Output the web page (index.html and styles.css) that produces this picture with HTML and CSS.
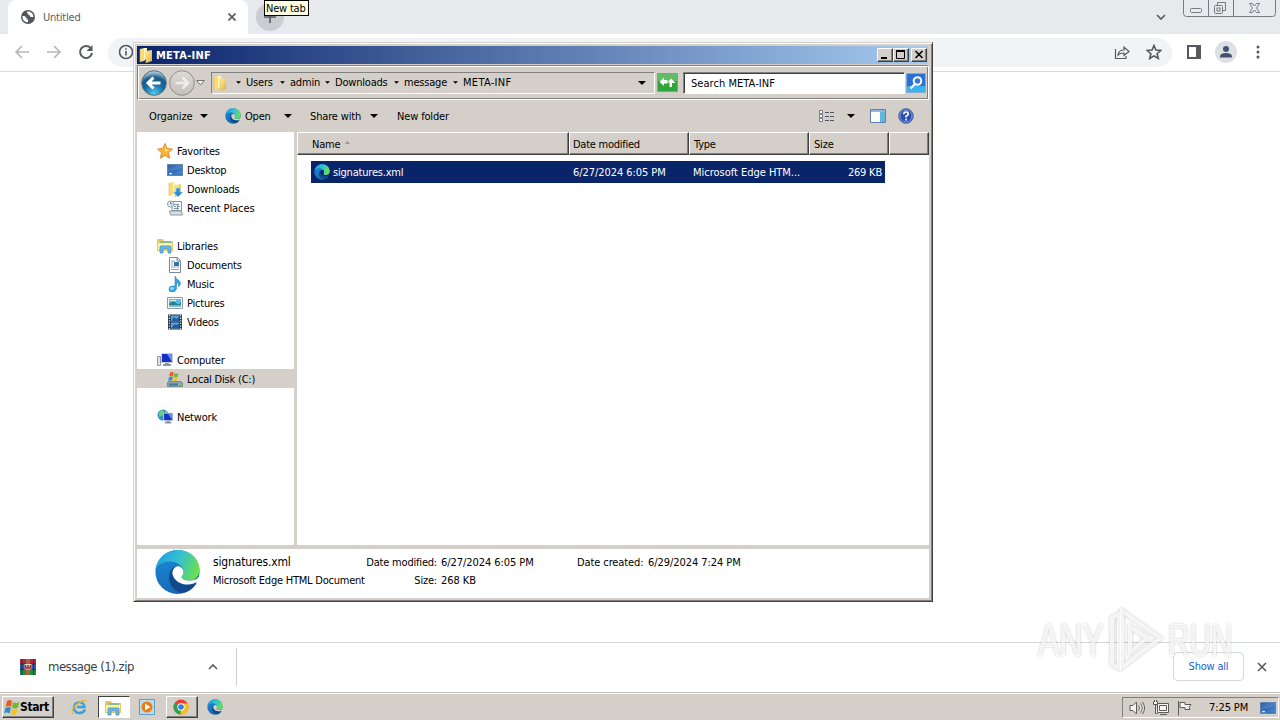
FILE: index.html
```
<!DOCTYPE html>
<html lang="en">
<head>
    <meta charset="utf-8">
    <title>Untitled</title>
    <link rel="stylesheet" href="styles.css">
</head>
<body>
    <!-- shared icons -->
    <svg class="defs" width="0" height="0">
        <defs>
            <linearGradient id="edgeTop" x1="0" y1=".3" x2="1" y2=".6">
                <stop offset="0" stop-color="#1d9fe0"/>
                <stop offset=".5" stop-color="#35c1d0"/>
                <stop offset="1" stop-color="#6be04a"/>
            </linearGradient>
            <linearGradient id="edgeLeft" x1="0" y1="0" x2=".4" y2="1">
                <stop offset="0" stop-color="#1b8fd6"/>
                <stop offset="1" stop-color="#1767b8"/>
            </linearGradient>
            <mask id="edgeCut" maskUnits="userSpaceOnUse" x="0" y="0" width="48" height="48">
                <path d="M0 0h48v48H0z" fill="#fff"/>
                <path d="M24 18c-4 1-6 5-5 9 2 6 8 10 16 10 4 0 6-1 8-2l5 1V26c-2 5-6 7-12 7-5 0-8-2-8-4 1-1 2-3 2-5 0-4-3-6-6-6z" fill="#000"/>
            </mask>
            <linearGradient id="gold" x1="0" y1="0" x2="1" y2="1">
                <stop offset="0" stop-color="#fff3a8"/>
                <stop offset="1" stop-color="#e0ad32"/>
            </linearGradient>
            <linearGradient id="screen" x1="0" y1="0" x2="1" y2="1">
                <stop offset="0" stop-color="#123f92"/>
                <stop offset="1" stop-color="#4a94e0"/>
            </linearGradient>
            <radialGradient id="orbBlue" cx=".5" cy=".95" r=".9">
                <stop offset="0" stop-color="#4fd0f5"/>
                <stop offset=".5" stop-color="#14699c"/>
                <stop offset=".75" stop-color="#1c5c89"/>
                <stop offset="1" stop-color="#a9cbe0"/>
            </radialGradient>
            <linearGradient id="orbGrey" x1="0" y1="0" x2="0" y2="1">
                <stop offset="0" stop-color="#dddad6"/>
                <stop offset="1" stop-color="#c3c0ba"/>
            </linearGradient>
        </defs>
        <symbol id="edge" viewBox="0 0 48 48">
            <g mask="url(#edgeCut)">
                <circle cx="24" cy="24" r="23" fill="url(#edgeLeft)"/>
                <path d="M16 25c-3 8 2 19 13 21 7-1 12-5 15-11-10 4-22 1-24-8 0-3 1-6 4-8-4-1-7 2-8 6z" fill="#114a8b"/>
                <path d="M1 21C4 8 13 1 25 1c13 0 22 10 22 20 0 8-5 12-12 12-4 0-8-2-8-4s3-3 3-6c0-5-6-10-14-10C9 13 4 16 1 21z" fill="url(#edgeTop)"/>
            </g>
        </symbol>
        <symbol id="folder" viewBox="0 0 16 16">
            <path d="M2 2l4-1v13l-4 1z" fill="#f5dc76"/>
            <path d="M6 1h3v10l-3 3z" fill="#fff6bd"/>
            <path d="M8 4l6-1v11l-6 2z" fill="url(#gold)"/>
            <path d="M8 4v12M2 2v13" stroke="#e0b650" stroke-width=".6"/>
        </symbol>
        <symbol id="library" viewBox="0 0 16 16">
            <path d="M0 1h6l1 2h9v10H0z" fill="#eac860"/>
            <path d="M1 5h14v7H1z" fill="#fff0a2"/>
            <path d="M3 4h11" stroke="#66b6a0" stroke-width="1.4"/>
            <path d="M3 15V9q0-1 1-1h9q1 0 1 1v6h-3v-4H6v4z" fill="#6db8e4" stroke="#3d87b9" stroke-width=".7"/>
        </symbol>
        <symbol id="desktop" viewBox="0 0 16 16">
            <path d="M.5 2.500h15v11H.5z" fill="url(#screen)" stroke="#5b83b5"/>
            <path d="M1 3h14v3L1 10z" fill="#fff" opacity=".15"/>
            <path d="M1 12.500h14" stroke="#3a76b8"/>
            <path d="M2 11.500h3" stroke="#c4e4ff" stroke-width="1.500"/>
        </symbol>
        <symbol id="flag" viewBox="0 0 16 16">
            <path d="M3 2q3-2 5 0L7 8q-3-2-5.500 0z" fill="#ee5a25"/>
            <path d="M9 3q3 2 6.500 0L14 8.500q-3 2-6 0z" fill="#72b93b"/>
            <path d="M1.500 9q3-2 5.500 0l-1.500 5.500q-3-2-5.500 0z" fill="#338bd0"/>
            <path d="M8 9.500q3 2 6 0L12.500 15q-3 2-6 0z" fill="#f4c426"/>
        </symbol>
        <symbol id="monitor" viewBox="0 0 16 16">
            <path d="M4 1h12v10H4z" fill="#c8cfd9"/>
            <path d="M5 2h10v8H5z" fill="#1530c2"/>
            <path d="M10 2h5v8z" fill="#6a8cf0"/>
            <path d="M8 11h4v1h2v2H6v-2h2z" fill="#8b95a3"/>
        </symbol>
        <symbol id="caret" viewBox="0 0 8 4">
            <path d="M0 0h8L4 4z" fill="currentColor"/>
        </symbol>
    </svg>

    <div class="browser">
        <div class="tabstrip">
            <div class="tab">
                <svg class="globe" viewBox="0 0 14 14">
                    <circle cx="7" cy="7" r="7" fill="#53575b"/>
                    <path d="M1.500 6c2 0 4 .6 4 2.300 0 1 1.500.5 1.500 2v2C4 12.500 1 10 1.500 6zM6 1.500c-.5 1.500 1 1.500 1 2.500 0 1.500 2 .5 2 2s2.500 1 3.500 1C12.500 4 10 1 6 1.500z" fill="#fff"/>
                </svg>
                <span class="tab-title">Untitled</span>
                <svg class="tab-close" viewBox="0 0 8 8"><path d="M.5.5l7 7M7.500.5l-7 7"/></svg>
            </div>
            <div class="new-tab"><svg viewBox="0 0 12 12"><path d="M6 0v12M0 6h12"/></svg></div>
            <svg class="tab-search" viewBox="0 0 10 6"><path d="M1 1l4 4 4-4"/></svg>
            <svg class="win-controls" viewBox="0 0 93 17">
                <path d="M.5 0v13.500q0 3 3 3h86q3 0 3-3V0M25.500 0v16M50.500 0v16"/>
                <rect x="7.500" y="8.500" width="11" height="4" rx="1"/>
                <path d="M34.500 5V2.500h8v8H40"/>
                <rect x="31.500" y="5.500" width="8" height="8" rx="1"/>
                <rect x="34" y="8" width="3" height="3"/>
                <path d="M66.500 3.500h3l2 2.500 2-2.500h3L73.500 8l3 4.500h-3l-2-2.500-2 2.500h-3l3-4.500z"/>
            </svg>
        </div>
        <div class="toolbar">
            <svg class="tool" viewBox="0 0 16 16"><path d="M15 8H2M8 2L2 8l6 6" stroke="#b5b7b9"/></svg>
            <svg class="tool" viewBox="0 0 16 16"><path d="M1 8h13M8 2l6 6-6 6" stroke="#b5b7b9"/></svg>
            <svg class="tool" viewBox="0 0 16 16"><path d="M13 4.500A6 6 0 1 0 14 9" stroke-width="2"/><path d="M14.500 1v6h-6z" class="solid"/></svg>
            <div class="omnibox">
                <svg class="info" viewBox="0 0 16 16"><circle cx="8" cy="8" r="6.500"/><path d="M8 7v4.500M8 4.200v1.600"/></svg>
                <svg class="share" viewBox="0 0 16 16"><path d="M1.500 5v9.500H12V12M4 11c.5-4 2.500-5 6-5V3l5 4.500-5 4V9c-3 0-4.500.5-6 2z"/></svg>
                <svg class="star" viewBox="0 0 16 16"><path d="M8 1.500l1.900 4.600 4.900.4-3.700 3.200 1.200 4.800L8 11.900l-4.300 2.600 1.200-4.800-3.700-3.200 4.900-.4z"/></svg>
            </div>
            <svg class="side-panel" viewBox="0 0 14 14"><path d="M1 1h12v12H1z" stroke-width="2"/><path d="M9 1h4v12H9z" class="solid"/></svg>
            <svg class="avatar" viewBox="0 0 22 22"><circle cx="11" cy="11" r="11" fill="#dde0e4"/><circle cx="11" cy="8" r="3" fill="#44526f"/><path d="M5 16.500v-1q0-3.500 6-3.500t6 3.500v1z" fill="#44526f"/></svg>
            <svg class="menu-dots" viewBox="0 0 4 14"><circle cx="2" cy="2" r="1.500"/><circle cx="2" cy="7" r="1.500"/><circle cx="2" cy="12" r="1.500"/></svg>
        </div>
        <div class="page"></div>
        <div class="downloads">
            <svg class="rar" viewBox="0 0 16 16">
                <path d="M0 0h16v5H0z" fill="#b5263f"/><path d="M0 5h16v5H0z" fill="#3557ae"/><path d="M0 10h16v6H0z" fill="#25884a"/>
                <path d="M0 5h16M0 10.500h16M2 0v16M13.500 0v16" stroke="#26233b" stroke-width=".8"/>
                <path d="M6 0h4v16H6z" fill="#a56832"/><path d="M4.500 5h7v5.500h-7z" fill="#e6dcc8"/><path d="M5.500 6v3h5V6M8 6v3" fill="none" stroke="#a02c2c"/>
            </svg>
            <span class="file-name">message (1).zip</span>
            <svg class="chevron-up" viewBox="0 0 10 6"><path d="M1 5l4-4 4 4"/></svg>
            <div class="split"></div>
            <div class="show-all">Show all</div>
            <svg class="bar-close" viewBox="0 0 10 10"><path d="M1 1l8 8M9 1L1 9"/></svg>
        </div>
    </div>

    <div class="taskbar">
        <div class="start"><svg><use href="#flag"/></svg>Start</div>
        <div class="task">
            <svg viewBox="0 0 16 16"><path d="M14 10.500C11.500 16 3 15 3 8.500S13 1.500 13.500 8H6" fill="none" stroke="#36a2e0" stroke-width="2.500"/><path d="M2 15C-2 11 8 1 15.500 1.500" fill="none" stroke="#e8b634" stroke-width="1.300"/></svg>
        </div>
        <div class="task pressed"><svg><use href="#library"/></svg></div>
        <div class="task">
            <svg viewBox="0 0 16 16"><path d="M.5.5h15v15H.5z" fill="#b9dcf0" stroke="#5c9fc6"/><circle cx="8" cy="8" r="5.500" fill="#ee7c14"/><path d="M6 4.800v6.400L11.500 8z" fill="#fff"/></svg>
        </div>
        <div class="task raised">
            <svg viewBox="0 0 16 16"><circle cx="8" cy="8" r="7.500" fill="#e8402f"/><path d="M8 8L1.500 4.200A7.500 7.500 0 0 0 7.500 15.500l4-5.500z" fill="#2ba24c"/><path d="M8 8l-.5 7.500A7.500 7.500 0 0 0 14.700 4.500H8z" fill="#fbc116"/><circle cx="8" cy="8" r="3.700" fill="#fff"/><circle cx="8" cy="8" r="2.800" fill="#3b7be8"/></svg>
        </div>
        <div class="task"><svg><use href="#edge"/></svg></div>
        <div class="tray">
            <svg viewBox="0 0 16 16"><path d="M1 5.500h3L7.500 2v12L4 10.500H1zM9.500 5.500q2 2.500 0 5M11.500 3.500q3.500 4.500 0 9M13.500 2q4 6 0 12"/></svg>
            <svg viewBox="0 0 16 16"><path d="M4.500 3.500h11v9h-11zM6.500 5.500h7v5h-7zM7 14.500h7M.5 1.500v3h4v-3M1.500 0v2M3.500 0v2M2.500 4.500v9h2"/></svg>
            <svg viewBox="0 0 16 16"><path d="M1.500 1v14.500M3 2.500h5v2h6l-2 3 1 2H8v-2H3z"/></svg>
            <span class="clock">7:25 PM</span>
            <svg class="peek"><use href="#desktop"/></svg>
        </div>
    </div>

    <div class="explorer">
        <div class="titlebar">
            <svg><use href="#folder"/></svg>
            <span>META-INF</span>
            <div class="caption-btn"><svg viewBox="0 0 10 9"><path d="M1 8h6" stroke-width="2"/></svg></div>
            <div class="caption-btn"><svg viewBox="0 0 10 9"><path d="M.5 1h8v7.500h-8z"/><path d="M0 1h9" stroke-width="2"/></svg></div>
            <div class="caption-btn close"><svg viewBox="0 0 10 9"><path d="M1.500 1l7 7M8.500 1l-7 7" stroke-width="1.600"/></svg></div>
        </div>
        <div class="navbar">
            <svg class="orb" viewBox="0 0 26 26"><circle cx="13" cy="13" r="12.300" fill="url(#orbBlue)" stroke="#5b6f7b"/><path d="M19.500 13H8M12.500 7.500L7 13l5.500 5.500" stroke="#fff" stroke-width="3" fill="none"/></svg>
            <svg class="orb" viewBox="0 0 26 26"><circle cx="13" cy="13" r="12.300" fill="url(#orbGrey)" stroke="#8f8c87"/><path d="M6.500 13H18M13.500 7.500L19 13l-5.500 5.500" stroke="#efede9" stroke-width="2.500" fill="none"/></svg>
            <svg class="recent" viewBox="0 0 9 6"><path d="M.7.500h7.600L4.500 5z" fill="#f4f3f0" stroke="#77746f"/></svg>
            <div class="address">
                <svg class="folder"><use href="#folder"/></svg>
                <svg class="sep"><use href="#caret"/></svg><span class="c1">Users</span>
                <svg class="sep"><use href="#caret"/></svg><span class="c2">admin</span>
                <svg class="sep"><use href="#caret"/></svg><span class="c3">Downloads</span>
                <svg class="sep"><use href="#caret"/></svg><span class="c4">message</span>
                <svg class="sep"><use href="#caret"/></svg><span class="c5">META-INF</span>
                <svg class="drop"><use href="#caret"/></svg>
            </div>
            <svg class="refresh" viewBox="0 0 21 19"><path d="M.5.5h20v18H.5z" fill="#2fa53b" stroke="#77a77d"/><path d="M1 1h19v7H1z" fill="#74c978" opacity=".7"/><path d="M2.500 9L7 4.500V7h3.500v3.500H7V13zM18.500 10L14 5.500 10.500 9.500h2V14H15v-4z" fill="#fff"/></svg>
            <div class="search">Search META-INF</div>
            <svg class="search-btn" viewBox="0 0 20 20"><path d="M.5.500h19v19H.5z" fill="#2a6fd6" stroke="#8badd4"/><path d="M1 13h18v6H1z" fill="#39b2ee"/><circle cx="11.500" cy="8" r="3.800" fill="#3c78d4" stroke="#fff" stroke-width="2"/><path d="M9 11l-4.500 4.500" stroke="#fff" stroke-width="2.400"/></svg>
        </div>
        <div class="commands">
            <span class="organize">Organize</span><svg class="arrow"><use href="#caret"/></svg>
            <svg class="cmd-edge"><use href="#edge"/></svg><span class="open">Open</span><svg class="arrow"><use href="#caret"/></svg>
            <span class="share-with">Share with</span><svg class="arrow"><use href="#caret"/></svg>
            <span class="new-folder">New folder</span>
            <svg class="views" viewBox="0 0 15 13"><path d="M.5.500h3v3h-3zM.5 4.500h3v3h-3zM.5 8.500h3v3h-3z" fill="#fff" stroke="#777b88"/><path d="M6 2.500h4M11 2.500h4M6 6.500h4M11 6.500h4M6 10.500h4M11 10.500h4" stroke="#50545e"/></svg>
            <svg class="arrow"><use href="#caret"/></svg>
            <svg class="preview" viewBox="0 0 16 14"><path d="M.5.500h15v13H.5z" fill="#fff" stroke="#5d7fa9"/><path d="M1 1h14v2H1z" fill="#93b5df"/><path d="M10 3h5v10h-5z" fill="#62b5db"/></svg>
            <svg class="help" viewBox="0 0 16 16"><circle cx="8" cy="8" r="7.400" fill="#2a4fae" stroke="#6d7fa9"/><circle cx="8" cy="8" r="6" fill="none" stroke="#93aee6" stroke-width=".8"/><path d="M5.800 6.300Q5.800 4 8 4t2.200 2Q10.200 7.200 8 8.300v1.200M8 10.800v1.700" fill="none" stroke="#fff" stroke-width="1.700"/></svg>
        </div>
        <div class="body">
            <div class="tree">
                <div class="row root"><svg viewBox="0 0 16 16"><path d="M8 .5l2.200 5 5.300.6-4 3.600 1.200 5.500L8 12.400l-4.700 2.800 1.200-5.500-4-3.600 5.300-.6z" fill="#fbb536" stroke="#d97920" stroke-width=".8"/><path d="M8 3l1.200 3.500 3 .5L8 9z" fill="#ffe58d"/></svg><span>Favorites</span></div>
                <div class="row"><svg><use href="#desktop"/></svg><span>Desktop</span></div>
                <div class="row"><svg viewBox="0 0 16 16"><use href="#folder" width="16" height="16"/><path d="M9 7h4v4h3l-5 5-5-5h3z" fill="#288ede" stroke="#b7e3ff" stroke-width=".6"/></svg><span>Downloads</span></div>
                <div class="row recent-places"><svg viewBox="0 0 16 16"><path d="M5 1.500h9.500v9H5z" fill="#f8fafc" stroke="#8395a5"/><path d="M7 4.500h5M7 6.500h2M10 6.500h3M7 8.500h5M10.500 4v6" stroke="#7b93a8"/><path d="M2.500 11h12l1 4h-12z" fill="#d8dde2" stroke="#8e9aa5"/><circle cx="3.500" cy="4" r="3" fill="#edf4f8" stroke="#899aa9"/><path d="M3.500 2v2h1.500" stroke="#667a8a" fill="none"/></svg><span>Recent Places</span></div>
                <div class="row root group"><svg><use href="#library"/></svg><span>Libraries</span></div>
                <div class="row"><svg viewBox="0 0 16 16"><path d="M3 .5h7.500l3 3v12H2.500V.5z" fill="#fff" stroke="#77899b"/><path d="M10 1v3h3" fill="#d5e1ec" stroke="#77899b"/><path d="M4 4h4M4 6h2M4 8h2M4 10h8M4 12.500h8" stroke="#93a5b5"/><path d="M7 5h5v4H7z" fill="#2d78a6"/></svg><span>Documents</span></div>
                <div class="row"><svg viewBox="0 0 16 16"><path d="M8 0q1 3 4 4.500 3 3-.5 6.500 1-3-2-4.500V13q-1 3-4.500 3T2 13q0-3 3.500-3H8z" fill="#36a4e6" stroke="#1c78b9" stroke-width=".5"/><ellipse cx="5" cy="12.500" rx="2" ry="1.500" fill="#91d5fa"/></svg><span>Music</span></div>
                <div class="row"><svg viewBox="0 0 16 16"><path d="M.5 2.500h15v11H.5z" fill="#fff" stroke="#8d9aa7"/><path d="M2 4h12v8H2z" fill="#5bb9e8"/><path d="M2 9q4-4 7-1t5-1v5H2z" fill="#297f86"/><path d="M3 5.500h6M2 11h12" stroke="#d8f4fb"/></svg><span>Pictures</span></div>
                <div class="row"><svg viewBox="0 0 16 16"><path d="M1 .500h14v15H1z" fill="#273948"/><path d="M4 1.500h8v6H4zM4 8.500h8v6H4z" fill="#5aa1de"/><path d="M5 6q2-4 3-2t4-1v4H5zM5 13q3-4 4-2l3-1v4H5z" fill="#225c9b"/><path d="M2.500 1v15M13.500 1v15" stroke="#d9e1e7" stroke-width="1.300" stroke-dasharray="1.300 1.300"/></svg><span>Videos</span></div>
                <div class="row root group"><svg viewBox="0 0 16 16"><use href="#monitor" width="16" height="16"/><path d="M.5 4.500h3v9h-3z" fill="#dfe3e7" stroke="#8f98a1"/></svg><span>Computer</span></div>
                <div class="row selected"><svg viewBox="0 0 16 16"><use href="#flag" x="1" y="0" width="11" height="11"/><path d="M1.500 10.500h12l2 1.500v3.500H.5V12z" fill="#8fa4b2" stroke="#607482" stroke-width=".7"/><path d="M2 13.500h9" stroke="#407b9a" stroke-width="2"/><path d="M12 13.500h2" stroke="#66d74e" stroke-width="1.500"/></svg><span>Local Disk (C:)</span></div>
                <div class="row root group"><svg viewBox="0 0 16 16"><circle cx="6" cy="6" r="5.500" fill="#3092bc"/><path d="M2 3q4-4 5 0l-2 4-3 1zM8 1l3 3-3 1z" fill="#73ce7b"/><use href="#monitor" x="3" y="3" width="13" height="13"/></svg><span>Network</span></div>
            </div>
            <div class="list">
                <div class="header">
                    <div class="col name">Name<svg viewBox="0 0 6 3"><path d="M0 3h6L3 0z"/></svg></div>
                    <div class="col date">Date modified</div>
                    <div class="col type">Type</div>
                    <div class="col size">Size</div>
                    <div class="col rest"></div>
                </div>
                <div class="file">
                    <div class="f-name"><svg><use href="#edge"/></svg>signatures.xml</div>
                    <div class="f-date">6/27/2024 6:05 PM</div>
                    <div class="f-type">Microsoft Edge HTM...</div>
                    <div class="f-size">269 KB</div>
                </div>
            </div>
        </div>
        <div class="details">
            <svg class="big-icon"><use href="#edge"/></svg>
            <div class="info-col first">
                <div class="big">signatures.xml</div>
                <div>Microsoft Edge HTML Document</div>
            </div>
            <div class="info-col labels">
                <div>Date modified:</div>
                <div>Size:</div>
            </div>
            <div class="info-col values">
                <div>6/27/2024 6:05 PM</div>
                <div>268 KB</div>
            </div>
            <div class="info-col created">
                <div>Date created:</div>
            </div>
            <div class="info-col last">
                <div>6/29/2024 7:24 PM</div>
            </div>
        </div>
    </div>

    <div class="tooltip">New tab</div>

    <div class="watermark">
        <span>ANY</span>
        <svg viewBox="0 0 56 64"><path d="M5 10v46l7 4V6z"/><path d="M15 3l38 27-38 29z"/><path d="M23 19l17 11-17 14z"/></svg>
        <span class="run">RUN</span>
    </div>
</body>
</html>
```
FILE: styles.css
```
* {
    box-sizing: border-box;
}

body {
    margin: 0;
    width: 1280px;
    height: 720px;
    overflow: hidden;
    position: relative;
    display: flex;
    flex-direction: column;
    background: #fff;
    color: #000;
    font-family: "DejaVu Sans Condensed", "DejaVu Sans", sans-serif;
    font-stretch: condensed;
    font-size: 11px;
    letter-spacing: -0.2px;
    white-space: nowrap;
}

svg {
    display: block;
    flex: none;
    width: 16px;
    height: 16px;
}

.defs {
    position: absolute;
    width: 0;
    height: 0;
}

/* browser */
.browser {
    flex: 1;
    display: flex;
    flex-direction: column;
}

.browser svg {
    fill: none;
    stroke: #55595d;
    stroke-width: 1.6;
}

.browser .globe,
.browser .avatar,
.browser .rar {
    stroke: none;
}

.browser .solid {
    fill: #55595d;
    stroke: none;
}

.tabstrip {
    height: 34px;
    display: flex;
    background: #e7eaed;
}

.tab {
    width: 240px;
    margin-left: 8px;
    padding: 0 12px 0 13px;
    display: flex;
    align-items: center;
    background: #fff;
    border-radius: 8px 8px 0 0;
    color: #5a5d61;
}

.globe {
    width: 14px;
    height: 14px;
}

.tab-title {
    margin-left: 8px;
    flex: 1;
}

.tab-close {
    width: 8px;
    height: 8px;
}

.new-tab {
    width: 28px;
    height: 28px;
    margin: 3px 0 0 8px;
    padding: 8px;
    border-radius: 50%;
    background: #c9ccd0;
}

.new-tab svg {
    width: 12px;
    height: 12px;
}

.tab-search {
    width: 10px;
    height: 6px;
    margin: 14px 17px 0 auto;
}

.browser .win-controls {
    width: 93px;
    height: 17px;
    margin-right: 4px;
    stroke: #777b7f;
    stroke-width: 1;
}

.toolbar {
    height: 38px;
    padding: 0 0 1px 14px;
    display: flex;
    align-items: center;
    border-bottom: 1px solid #d9dbdd;
}

.tool {
    margin-right: 16px;
}

.omnibox {
    width: 1064px;
    height: 29px;
    margin-left: -2px;
    padding: 0 10px;
    display: flex;
    align-items: center;
    gap: 16px;
    border-radius: 15px;
    background: #f1f3f4;
}

.info {
    margin-right: auto;
}

.browser .share {
    stroke-width: 1.2;
}

.side-panel {
    width: 14px;
    height: 14px;
    margin-left: 15px;
}

.avatar {
    width: 22px;
    height: 22px;
    margin-left: 14px;
}

.browser .menu-dots {
    width: 4px;
    height: 14px;
    margin-left: 19px;
    fill: #55595d;
    stroke: none;
}

.page {
    flex: 1;
}

.downloads {
    height: 50px;
    padding: 0 13px 2px 20px;
    display: flex;
    align-items: center;
    border-top: 1px solid #d2d4d6;
}

.file-name {
    width: 167px;
    margin-left: 12px;
    font-size: 13px;
    letter-spacing: -0.5px;
    color: #3c4043;
}

.chevron-up {
    width: 10px;
    height: 6px;
    margin-left: -7px;
}

.split {
    width: 1px;
    height: 38px;
    margin-left: 18px;
    background: #cfd1d3;
}

.show-all {
    width: 71px;
    height: 29px;
    margin-left: auto;
    border: 1px solid #d5d8db;
    border-radius: 4px;
    line-height: 27px;
    text-align: center;
    color: #1a65c8;
}

.bar-close {
    width: 10px;
    height: 10px;
    margin-left: 13px;
}

/* taskbar */
.taskbar {
    height: 28px;
    padding: 3px 0 0 2px;
    display: flex;
    background: #d4cfc8;
    border-top: 1px solid #c2bfb8;
    box-shadow: inset 0 1px #fff;
}

.start,
.raised {
    border: 1px solid;
    border-color: #fff #404040 #404040 #fff;
    box-shadow: inset -1px -1px #808080;
}

.start {
    width: 52px;
    height: 22px;
    margin-right: 10px;
    padding-left: 1px;
    display: flex;
    align-items: center;
    font-weight: bold;
    font-size: 12px;
    letter-spacing: -0.4px;
}

.task {
    width: 32px;
    height: 22px;
    margin-right: 2px;
    padding: 3px 7px;
}

.pressed {
    background: #fff;
    border: 1px solid;
    border-color: #404040 #fff #fff #404040;
    padding: 3px 6px;
}

.raised {
    padding: 2px 6px;
}

.tray {
    width: 157px;
    margin: 1px 1px 2px auto;
    padding-left: 6px;
    display: flex;
    align-items: center;
    gap: 8px;
    border: 1px solid;
    border-color: #808080 #fff #fff #808080;
}

.tray svg {
    fill: #f5f4f1;
    stroke: #5d5b58;
}

.clock {
    width: 43px;
    margin-left: 8px;
    letter-spacing: -0.1px;
}

.tray .peek {
    stroke: none;
}

/* file explorer window */
.explorer {
    position: absolute;
    left: 133px;
    top: 42px;
    width: 800px;
    height: 560px;
    padding: 2px 3px;
    display: flex;
    flex-direction: column;
    background: #d4cfc8;
    border: 1px solid;
    border-color: #d4cfc8 #404040 #404040 #d4cfc8;
    box-shadow: inset 1px 1px #fff, inset -1px -1px #808080;
}

.titlebar {
    height: 18px;
    margin: 1px 1px 0 0;
    padding: 0 1px;
    display: flex;
    align-items: center;
    background: linear-gradient(90deg, #0a246a, #a6caf0);
    color: #fff;
    font-weight: bold;
    letter-spacing: 0.25px;
}

.titlebar span {
    margin: 0 auto 0 2px;
}

.caption-btn {
    width: 16px;
    height: 14px;
    padding: 1px 2px;
    background: #d4cfc8;
    border: 1px solid;
    border-color: #fff #404040 #404040 #fff;
    box-shadow: inset -1px -1px #808080;
}

.caption-btn svg {
    width: 10px;
    height: 9px;
    fill: none;
    stroke: #000;
}

.close {
    margin-left: 2px;
}

.navbar {
    height: 35px;
    margin: 1px 0 0;
    padding-left: 3px;
    display: flex;
    align-items: center;
    border: 1px solid;
    border-color: #808080 #fff #fff #808080;
    box-shadow: inset 1px 1px #fff, inset -1px -1px #808080;
}

.orb {
    width: 26px;
    height: 26px;
    margin-right: 2px;
}

.recent {
    width: 9px;
    height: 6px;
    margin-left: -1px;
}

.address {
    width: 444px;
    height: 22px;
    margin-left: 6px;
    display: flex;
    align-items: center;
    border: 1px solid;
    border-color: #808080 #fff #fff #808080;
}

.address .folder {
    margin-right: 8px;
}

.sep {
    width: 5px;
    height: 3px;
    margin-right: 5px;
}

.c1 { width: 34px; }
.c2 { width: 35px; }
.c3 { width: 59px; }
.c4 { width: 49px; }
.c5 { letter-spacing: 0.3px; }

.drop {
    width: 8px;
    height: 4px;
    margin: 0 8px 0 auto;
}

.refresh {
    width: 21px;
    height: 19px;
    margin-left: 2px;
}

.search {
    width: 222px;
    height: 22px;
    margin-left: 5px;
    padding-left: 7px;
    background: #fff;
    border: 1px solid;
    border-color: #808080 #fff #fff #808080;
    box-shadow: inset 1px 1px #404040;
    letter-spacing: 0.05px;
    line-height: 21px;
}

.search-btn {
    width: 20px;
    height: 20px;
    margin-left: 1px;
}

.commands {
    height: 32px;
    padding-left: 12px;
    display: flex;
    align-items: center;
}

.organize { width: 51px; letter-spacing: -0.1px; }
.open { width: 39px; margin-left: 4px; }
.share-with { width: 60px; margin-left: 18px; letter-spacing: -0.15px; }
.new-folder { margin: 0 auto 0 19px; letter-spacing: -0.15px; }

.arrow {
    width: 8px;
    height: 4px;
}

.cmd-edge {
    margin-left: 17px;
}

.views {
    width: 15px;
    height: 13px;
    margin-right: 13px;
}

.preview {
    width: 16px;
    height: 14px;
    margin: 0 12px 0 15px;
}

.help {
    margin-right: 15px;
}

.body {
    height: 413px;
    display: flex;
}

.tree {
    width: 157px;
    padding-top: 9px;
    background: #fff;
}

.row {
    height: 19px;
    padding-left: 30px;
    display: flex;
    align-items: center;
    gap: 4px;
}

.row span {
    padding-top: 2px;
}

.recent-places {
    letter-spacing: -0.1px;
}

.root {
    padding-left: 20px;
}

.group {
    margin-top: 19px;
}

.selected {
    background: #d4cfc8;
}

.list {
    width: 632px;
    margin-left: 3px;
    background: #fff;
}

.header {
    height: 23px;
    display: flex;
    background: #d4cfc8;
}

.col {
    border: 1px solid;
    border-color: #fff #404040 #404040 #fff;
    box-shadow: inset -1px -1px #808080;
    padding-left: 4px;
    line-height: 23px;
}

.name {
    width: 272px;
    padding-left: 14px;
    display: flex;
}

.name svg {
    width: 5px;
    height: 3px;
    margin: 8px 0 0 5px;
    fill: #918d86;
}

.date { width: 120px; padding-left: 3px; letter-spacing: -0.25px; }
.type { width: 120px; }
.size { width: 80px; }
.rest { width: 40px; }

.file {
    width: 574px;
    height: 22px;
    margin: 6px 0 0 14px;
    padding: 0 3px 0 4px;
    display: flex;
    align-items: center;
    background: #0a246a;
    color: #fff;
}

.f-name {
    width: 258px;
    display: flex;
    align-items: center;
    gap: 2px;
}

.f-date { width: 120px; letter-spacing: -0.06px; }
.f-type { width: 120px; letter-spacing: -0.02px; }
.f-size { flex: 1; text-align: right; }

.f-name svg {
    margin-left: -1px;
    margin-right: 1px;
}

.details {
    height: 49px;
    margin-top: 4px;
    padding: 0 17px;
    display: flex;
    background: #fff;
}

.big-icon {
    width: 47px;
    height: 46px;
}

.info-col {
    padding-top: 5px;
    line-height: 18px;
}

.first {
    width: 146px;
    margin-left: 12px;
    letter-spacing: -0.23px;
}

.big {
    margin-top: -1px;
    height: 19px;
    font-size: 12px;
    letter-spacing: -0.15px;
}

.labels {
    width: 78px;
    text-align: right;
}

.values {
    width: 136px;
    margin-left: 4px;
    letter-spacing: -0.06px;
}

.created {
    width: 71px;
    letter-spacing: -0.1px;
}

.last {
    letter-spacing: -0.06px;
}

.tooltip {
    position: absolute;
    left: 264px;
    top: 0;
    width: 45px;
    height: 16px;
    padding-left: 1px;
    border: 1px solid #000;
    background: #ffffe1;
    line-height: 15px;
}

.watermark {
    position: absolute;
    left: 1038px;
    top: 608px;
    display: flex;
    align-items: center;
    gap: 5px;
    font: 46px/34px "Liberation Sans", sans-serif;
    color: rgba(255, 255, 255, 0.8);
    text-shadow: 0 0 3px rgba(0, 0, 0, 0.35);
    -webkit-text-stroke: 1px rgba(255, 255, 255, 0.8);
}

.watermark span {
    width: 64px;
    transform: scaleX(0.7);
    transform-origin: left;
}

.watermark .run {
    transform: scaleX(0.65);
}

.watermark svg {
    width: 56px;
    height: 64px;
    fill: none;
    stroke: rgba(255, 255, 255, 0.8);
    stroke-width: 4;
    filter: drop-shadow(0 0 1.5px rgba(0, 0, 0, 0.3));
}
```
